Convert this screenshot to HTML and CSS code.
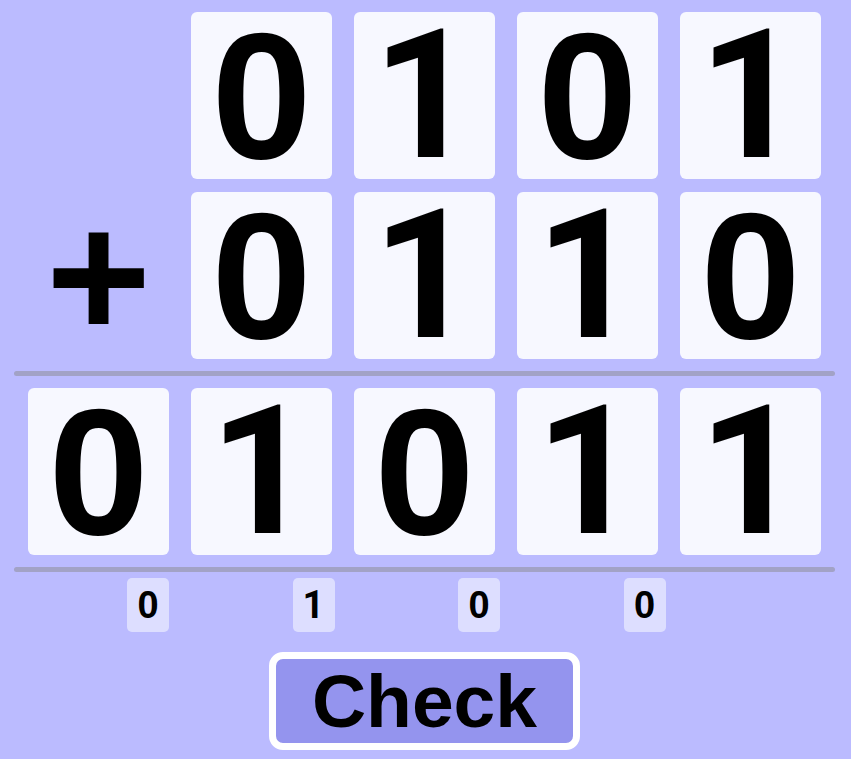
FILE: index.html
```html
<!DOCTYPE html>
<html>
<head>
<meta charset="utf-8">
<link rel="stylesheet" href="styles.css">
</head>
<body>
<div class="board">
  <div class="row">
    <div class="cell"></div>
    <div class="cell tile">0</div>
    <div class="cell tile one">1</div>
    <div class="cell tile">0</div>
    <div class="cell tile one">1</div>
  </div>
  <div class="row">
    <div class="cell op">+</div>
    <div class="cell tile">0</div>
    <div class="cell tile one">1</div>
    <div class="cell tile one">1</div>
    <div class="cell tile">0</div>
  </div>
  <div class="rule"></div>
  <div class="row">
    <div class="cell tile">0</div>
    <div class="cell tile one">1</div>
    <div class="cell tile">0</div>
    <div class="cell tile one">1</div>
    <div class="cell tile one">1</div>
  </div>
  <div class="rule rule-bottom"></div>
  <div class="carries">
    <div class="carry">0</div>
    <div class="carry one">1</div>
    <div class="carry">0</div>
    <div class="carry">0</div>
  </div>
  <div class="actions">
    <button class="check">Check</button>
  </div>
</div>
</body>
</html>
```

FILE: styles.css
```css
html, body {
  margin: 0;
  padding: 0;
  background: #bbbbff;
  font-family: "Liberation Sans", Arial, sans-serif;
  font-weight: bold;
  color: #000;
}

.board {
  width: 851px;
  height: 759px;
  padding-top: 12px;
  box-sizing: border-box;
}

.row {
  display: grid;
  grid-template-columns: repeat(5, 141px);
  column-gap: 22px;
  padding-left: 28px;
  margin-bottom: 13px;
}

.row + .rule {
  margin-top: -1px;
}

.cell {
  height: 167px;
  line-height: 167px;
  font-size: 180px;
  text-align: center;
}

.tile {
  background: #f7f8ff;
  border-radius: 6px;
}

.one {
  font-family: Roboto, "Liberation Sans", sans-serif;
}

.rule {
  height: 5px;
  margin: 0 16px 12px 14px;
  background: #a2a2c6;
  border-radius: 3px;
}

.rule-bottom {
  margin-bottom: 6px;
}

.carries {
  display: flex;
  padding-left: 127px;
  gap: 123.5px;
}

.carry {
  width: 42px;
  height: 54px;
  line-height: 54px;
  font-size: 38px;
  text-align: center;
  background: #dddeff;
  border-radius: 5px;
}

.actions {
  display: flex;
  justify-content: center;
  margin-top: 20px;
  padding-right: 2px;
}

.check {
  width: 311px;
  height: 98px;
  padding: 0;
  border: 7px solid #ffffff;
  border-radius: 14px;
  background: #9494ee;
  font-family: "Liberation Sans", Arial, sans-serif;
  font-weight: bold;
  font-size: 75px;
  line-height: 84px;
  color: #000;
  box-sizing: border-box;
}
```
